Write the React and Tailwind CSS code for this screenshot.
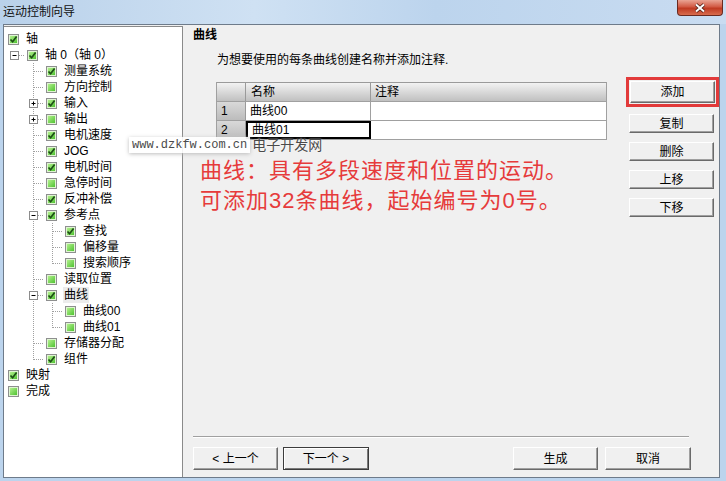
import React from 'react';

// tree rows: guides = one connector cell per level, exp = expander box on the last cell
const tree = [
  { label: '轴', on: true, guides: [] },
  { label: '轴 0（轴 0）', on: true, guides: ['-'], exp: '-' },
  { label: '测量系统', on: true, guides: [' ', 'T'] },
  { label: '方向控制', on: false, guides: [' ', 'T'] },
  { label: '输入', on: true, guides: [' ', 'T'], exp: '+' },
  { label: '输出', on: false, guides: [' ', 'T'], exp: '+' },
  { label: '电机速度', on: true, guides: [' ', 'T'] },
  { label: 'JOG', on: true, guides: [' ', 'T'] },
  { label: '电机时间', on: true, guides: [' ', 'T'] },
  { label: '急停时间', on: false, guides: [' ', 'T'] },
  { label: '反冲补偿', on: true, guides: [' ', 'T'] },
  { label: '参考点', on: true, guides: [' ', 'T'], exp: '-' },
  { label: '查找', on: true, guides: [' ', 'I', 'T'] },
  { label: '偏移量', on: false, guides: [' ', 'I', 'T'] },
  { label: '搜索顺序', on: false, guides: [' ', 'I', 'L'] },
  { label: '读取位置', on: false, guides: [' ', 'T'] },
  { label: '曲线', on: true, guides: [' ', 'T'], exp: '-', sel: true },
  { label: '曲线00', on: false, guides: [' ', 'I', 'T'] },
  { label: '曲线01', on: false, guides: [' ', 'I', 'L'] },
  { label: '存储器分配', on: false, guides: [' ', 'T'] },
  { label: '组件', on: true, guides: [' ', 'L'] },
  { label: '映射', on: true, guides: [] },
  { label: '完成', on: false, guides: [] },
];

const dot = { stroke: '#a0a0a0', strokeWidth: 1, strokeDasharray: '1 1' };

function Guide({ type, exp }) {
  return (
    <svg width="19" height="16" className="shrink-0">
      {(type === 'I' || type === 'T') && <line x1="9.5" y1="0" x2="9.5" y2="16" {...dot} />}
      {type === 'L' && <line x1="9.5" y1="0" x2="9.5" y2="9" {...dot} />}
      {(type === 'T' || type === 'L' || type === '-') && (
        <line x1="10" y1="8.5" x2="19" y2="8.5" {...dot} />
      )}
      {exp && (
        <g>
          <rect x="5.5" y="4.5" width="8" height="8" fill="#fff" stroke="#8c8c8c" />
          <line x1="7.5" y1="8.5" x2="11.5" y2="8.5" stroke="#000" />
          {exp === '+' && <line x1="9.5" y1="6.5" x2="9.5" y2="10.5" stroke="#000" />}
        </g>
      )}
    </svg>
  );
}

function Check({ on }) {
  return (
    <span className="relative ml-[3px] flex h-[11px] w-[11px] shrink-0 items-center justify-center border border-[#8e8f8f] bg-[#dff5d2]">
      <span className="h-[7px] w-[7px] bg-[linear-gradient(135deg,#b2f08c,#4fc232)]" />
      {on && (
        <svg width="9" height="9" className="absolute left-0 top-0">
          <path d="M1.5 4.5 L3.6 6.8 L7.6 1.6" fill="none" stroke="#1d4f16" strokeWidth="1.7" />
        </svg>
      )}
    </span>
  );
}

function Btn({ children, className = '', def }) {
  const skin = def
    ? 'border border-[#3c3c3c] shadow-[inset_1px_1px_0_#fff,inset_-1px_-1px_0_#7a7a7a]'
    : 'border border-t-[#fff] border-l-[#fff] border-r-[#6a6a6a] border-b-[#6a6a6a] shadow-[inset_-1px_-1px_0_#a0a0a0]';
  return (
    <div className={`flex items-center justify-center bg-[#f0f0f0] leading-4 ${skin} ${className}`}>
      {children}
    </div>
  );
}

export default function App() {
  return (
    <div className="relative flex h-[481px] w-[726px] flex-col overflow-hidden bg-[#bcd4ed] font-['Liberation_Sans','Noto_Sans_CJK_SC',sans-serif] text-[12px] text-black">
      {/* title bar */}
      <div className="flex h-[24px] shrink-0 items-start justify-between bg-[linear-gradient(90deg,#b9d1ea,#cfe1f3_35%,#bcd4ed_60%,#c9dcf1)]">
        <span className="pl-[3px] pt-[4px] leading-4 text-[#111]">运动控制向导</span>
        <div className="mr-[3px] flex h-[16px] w-[46px] items-center justify-center rounded-b-[4px] border border-t-0 border-[#6a2a20] bg-[linear-gradient(#e9a494,#d25a44_45%,#bf3a22_55%,#d86c4e)]">
          <svg width="12" height="10">
            <path d="M2 1.5 L10 8.5 M10 1.5 L2 8.5" stroke="#4a1a12" strokeWidth="3.6" />
            <path d="M2 1.5 L10 8.5 M10 1.5 L2 8.5" stroke="#fff" strokeWidth="2" />
          </svg>
        </div>
      </div>

      <div className="flex h-[454px] shrink-0">
        <div className="w-[3px]" />
        <div className="flex w-[717px] border border-[#6e7b8a] bg-[#f0f0f0]">
          {/* tree */}
          <div className="mt-[1px] w-[179px] shrink-0 border-t border-r border-[#8a8a8a] bg-white pt-[4px]">
            {tree.map((item, i) => (
              <div key={i} className="flex h-4 items-center pl-[1px]">
                {item.guides.map((g, j) => (
                  <Guide key={j} type={g} exp={j === item.guides.length - 1 ? item.exp : null} />
                ))}
                <Check on={item.on} />
                <span className={`ml-[6px] whitespace-nowrap px-[1px] leading-4 ${item.sel ? 'bg-[#ececec]' : ''}`}>
                  {item.label}
                </span>
              </div>
            ))}
          </div>

          {/* page */}
          <div className="flex flex-1 flex-col">
            <div className="pl-[10px] pt-[2px] font-bold leading-4">曲线</div>
            <div className="flex">
              <div className="flex w-[424px] flex-col">
                <div className="mt-[9px] pl-[34px] leading-4">为想要使用的每条曲线创建名称并添加注释.</div>

                <div className="ml-[33px] mt-[14px] w-[391px] border-x border-b border-[#a0a0a0]">
                  <div className="flex h-[19px] border-t border-[#9a9a9a] bg-[linear-gradient(#f2f2f2,#c0c0c0)] leading-4">
                    <div className="w-[29px] border-r border-[#9a9a9a]" />
                    <div className="flex w-[125px] items-center border-r border-[#9a9a9a] pl-[5px]">名称</div>
                    <div className="flex flex-1 items-center pl-[4px]">注释</div>
                  </div>
                  {['曲线00', '曲线01'].map((name, i) => (
                    <div key={i} className="flex h-[19px] border-t border-[#a0a0a0] leading-4">
                      <div className="flex w-[29px] items-center border-r border-[#9a9a9a] bg-[linear-gradient(#d9d9d9,#bcbcbc)] pl-[4px]">
                        {i + 1}
                      </div>
                      <div
                        className={`flex w-[125px] items-center bg-white pl-[4px] ${
                          i === 1 ? 'border-2 border-black' : 'border-r border-[#a0a0a0]'
                        }`}
                      >
                        {name}
                      </div>
                      <div className="flex-1 bg-white" />
                    </div>
                  ))}
                </div>

                <div className="ml-[17px] mt-[16px] whitespace-nowrap text-[22px] leading-[30px] tracking-[1px] text-[#e63b3b]">
                  <div>曲线：具有多段速度和位置的运动。</div>
                  <div>可添加32条曲线，起始编号为0号。</div>
                </div>
              </div>

              <div className="ml-[19px] mt-[34px] flex w-[93px] flex-col">
                <div className="border-[3px] border-[#e23a3a] p-[1px]">
                  <Btn className="h-[22px] w-[85px]">添加</Btn>
                </div>
                <Btn className="ml-[3px] mt-[7px] h-[19px] w-[85px]">复制</Btn>
                <Btn className="ml-[3px] mt-[9px] h-[19px] w-[85px]">删除</Btn>
                <Btn className="ml-[3px] mt-[9px] h-[19px] w-[85px]">上移</Btn>
                <Btn className="ml-[3px] mt-[9px] h-[19px] w-[85px]">下移</Btn>
              </div>
            </div>

            <div className="flex-1" />
            <div className="ml-[10px] h-[2px] w-[496px] border-t border-b border-t-[#a0a0a0] border-b-white" />
            <div className="ml-[10px] mt-[9px] flex w-[498px] justify-between pb-[7px]">
              <div className="flex gap-[5px]">
                <Btn className="h-[23px] w-[85px]">&lt; 上一个</Btn>
                <Btn def className="h-[23px] w-[86px]">下一个 &gt;</Btn>
              </div>
              <div className="flex gap-[7px]">
                <Btn className="h-[23px] w-[85px]">生成</Btn>
                <Btn className="h-[23px] w-[86px]">取消</Btn>
              </div>
            </div>
          </div>
        </div>
        <div className="flex-1" />
      </div>

      {/* site watermark stamped over the screenshot */}
      <div className="absolute left-[129px] top-[137px] flex items-center gap-[2px] text-[#4a4a4a]">
        <span className="bg-white/90 px-[3px] font-['Liberation_Mono',monospace] leading-4 shadow-[0_1px_4px_#bdbdbd]">
          www.dzkfw.com.cn
        </span>
        <span className="text-[14px] leading-4 [text-shadow:0_0_2px_#fff]">电子开发网</span>
      </div>
    </div>
  );
}
